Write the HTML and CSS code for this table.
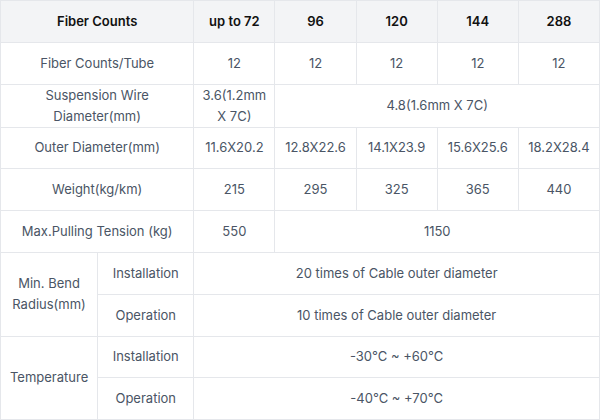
FILE: index.html
```html
<!DOCTYPE html>
<html>
<head>
<meta charset="utf-8">
<link rel="stylesheet" href="styles.css">
</head>
<body>
<table class="spec">
  <colgroup>
    <col class="c1"><col class="c2"><col class="c3"><col class="c3"><col class="c3"><col class="c3"><col class="c3">
  </colgroup>
  <thead>
    <tr><th colspan="2">Fiber Counts</th><th>up to 72</th><th>96</th><th>120</th><th>144</th><th>288</th></tr>
  </thead>
  <tbody>
    <tr><td colspan="2">Fiber Counts/Tube</td><td>12</td><td>12</td><td>12</td><td>12</td><td>12</td></tr>
    <tr><td colspan="2">Suspension Wire<br>Diameter(mm)</td><td>3.6(1.2mm<br>X 7C)</td><td colspan="4">4.8(1.6mm X 7C)</td></tr>
    <tr><td colspan="2">Outer Diameter(mm)</td><td>11.6X20.2</td><td>12.8X22.6</td><td>14.1X23.9</td><td>15.6X25.6</td><td>18.2X28.4</td></tr>
    <tr><td colspan="2">Weight(kg/km)</td><td>215</td><td>295</td><td>325</td><td>365</td><td>440</td></tr>
    <tr><td colspan="2">Max.Pulling Tension (kg)</td><td>550</td><td colspan="4">1150</td></tr>
    <tr><td rowspan="2">Min. Bend<br>Radius(mm)</td><td>Installation</td><td colspan="5">20 times of Cable outer diameter</td></tr>
    <tr><td>Operation</td><td colspan="5">10 times of Cable outer diameter</td></tr>
    <tr><td rowspan="2">Temperature</td><td>Installation</td><td colspan="5">-30°C ~ +60°C</td></tr>
    <tr><td>Operation</td><td colspan="5">-40°C ~ +70°C</td></tr>
  </tbody>
</table>
</body>
</html>
```
FILE: styles.css
```css
html, body {
  margin: 0;
  padding: 0;
  background: #ffffff;
}
.spec {
  width: 600px;
  border-collapse: collapse;
  table-layout: fixed;
  font-family: Inter, "Noto Sans", sans-serif;
  font-size: 13px;
  line-height: 21px;
  color: #4a5565;
}
.c1 { width: 97px; }
.c2 { width: 96px; }
.c3 { width: 81px; }
.spec tr {
  height: 41.8px;
}
.spec th, .spec td {
  border: 1px solid #e5e7eb;
  text-align: center;
  vertical-align: middle;
  padding: 0 2px;
}
.spec th {
  background: #f3f4f6;
  color: #111111;
  font-weight: 600;
}
```
